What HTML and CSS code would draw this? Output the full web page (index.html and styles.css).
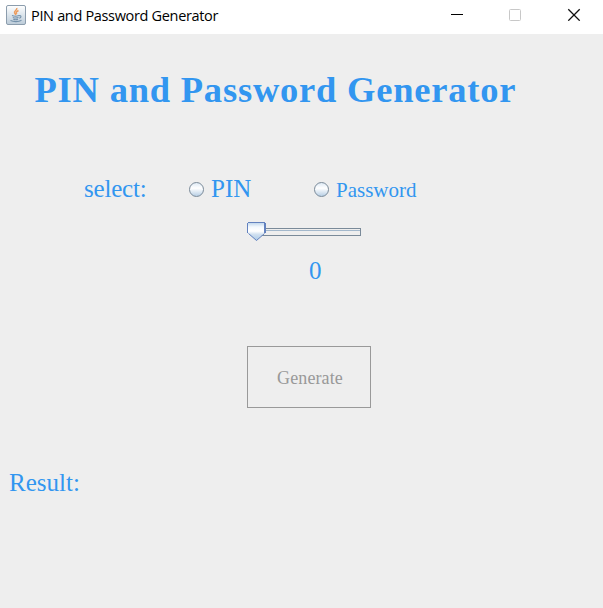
FILE: index.html
```html
<!DOCTYPE html>
<html lang="en">
<head>
<meta charset="utf-8">
<title>PIN and Password Generator</title>
<link rel="stylesheet" href="styles.css">
</head>
<body>
<header class="titlebar">
  <svg class="app-icon" width="20" height="20" viewBox="0 0 20 20">
    <defs><linearGradient id="tile" x2="0" y2="1"><stop offset="0" stop-color="#fff"/><stop offset=".5" stop-color="#dce5ec"/><stop offset="1" stop-color="#bccbd8"/></linearGradient></defs>
    <rect x=".5" y=".5" width="19" height="19" rx="1.5" fill="url(#tile)" stroke="#8c9dad"/>
    <path d="M10.800 3c.7 2.200-3.200 2.800-2.200 4.800L10 10M12.500 5.500c-2 1-3 1.800-1.600 3.300" fill="none" stroke="#ed9c5c" stroke-width="1.500"/>
    <path d="M6 10.500c2 .8 5 .8 7 0M6.800 12.500c2 .7 4 .7 5.700 0M7.300 14.200c1.500.6 3.500.6 4.700 0M13 10.800c2.600-.7 2.600 1.700.2 2.400M4.500 15.500c3 1.500 8 1.500 11-.2" fill="none" stroke="#7592ab" stroke-width="1.100"/>
  </svg>
  <span class="window-title">PIN and Password Generator</span>
  <svg class="controls" width="130" height="14" viewBox="0 0 130 14" fill="none">
    <path d="M0 7.500h12" stroke="#000"/>
    <rect x="58.500" y="2.500" width="11" height="11" rx="1" stroke="#c8c8c8"/>
    <path d="M117.300 2.300l11.400 11.400M128.700 2.300l-11.400 11.400" stroke="#111" stroke-width="1.300"/>
  </svg>
</header>
<main class="content">
  <h1 class="heading">PIN and Password Generator</h1>
  <div class="options">
    <span class="select-label">select:</span>
    <label class="radio pin"><i class="dot"></i>PIN</label>
    <label class="radio password"><i class="dot"></i><span>Password</span></label>
  </div>
  <svg class="slider" width="115" height="21" viewBox="0 0 115 21">
    <defs><linearGradient id="thumb" x2="0" y2="1"><stop offset="0" stop-color="#bdd5ec"/><stop offset=".25" stop-color="#f4f9fe"/><stop offset=".48" stop-color="#fff"/><stop offset=".65" stop-color="#d3e2f1"/><stop offset="1" stop-color="#a9c8e6"/></linearGradient></defs>
    <rect x="5.500" y="7.500" width="108" height="7" fill="#eee" stroke="#7a8a99"/>
    <path d="M6 9.500h107" stroke="#a3b8cc"/>
    <path d="M1 1.500h16v11l-7.500 7L1 12.500z" fill="url(#thumb)"/>
    <path d="M1 1.500h17M.5 2v10M1.500 12.500l8 7 8-7" fill="none" stroke="#6382bf"/>
    <path d="M18 2v10" stroke="#6382bf" stroke-width="2"/>
  </svg>
  <output class="length">0</output>
  <button class="generate" disabled>Generate</button>
  <p class="result">Result:</p>
</main>
</body>
</html>
```
FILE: styles.css
```css
* { box-sizing: border-box; }
body {
  margin: 0;
  height: 608px;
  overflow: hidden;
  background: #eee;
  color: #3296f0;
  font-family: "Liberation Serif", serif;
  font-size: 25px;
}
.titlebar {
  display: flex;
  height: 34px;
  padding: 5px 22px 0 6px;
  background: #fff;
  color: #000;
}
.app-icon { flex: none; }
.window-title {
  margin-left: 5px;
  font: 14.5px/22px "Open Sans", "Noto Sans", sans-serif;
  letter-spacing: -0.33px;
  white-space: nowrap;
}
.controls { margin: 2px 0 0 auto; }
.content {
  display: flex;
  flex-direction: column;
  align-items: flex-start;
}
.heading {
  margin: 36px 0 0 34.5px;
  font-size: 36.5px;
  line-height: 40px;
  letter-spacing: 0.79px;
  white-space: nowrap;
}
.options {
  display: flex;
  height: 30px;
  margin: 64px 0 0 84px;
  line-height: 30px;
}
.select-label {
  width: 105px;
  letter-spacing: -0.2px;
}
.radio { display: flex; }
.pin { width: 125px; }
.dot {
  width: 15px;
  height: 15px;
  margin: 8px 7px 0 0;
  border: 1px solid #7a8a99;
  border-radius: 50%;
  background: linear-gradient(#dfeaf5, #fff 40%, #b8cfe5);
}
.password { font-size: 21px; }
.password span { padding-top: 1px; }
.slider { margin: 17px 0 0 247px; }
.length {
  margin: 14px 0 0 309px;
  line-height: 30px;
}
.generate {
  width: 124px;
  height: 62px;
  margin: 60px 0 0 247px;
  padding: 1px 0 0 2px;
  border: 1px solid #999;
  background: transparent;
  color: #999;
  font: 18px/20px "Liberation Serif", serif;
  letter-spacing: 0.1px;
}
.result {
  margin: 60px 0 0 9px;
  line-height: 30px;
}
```
